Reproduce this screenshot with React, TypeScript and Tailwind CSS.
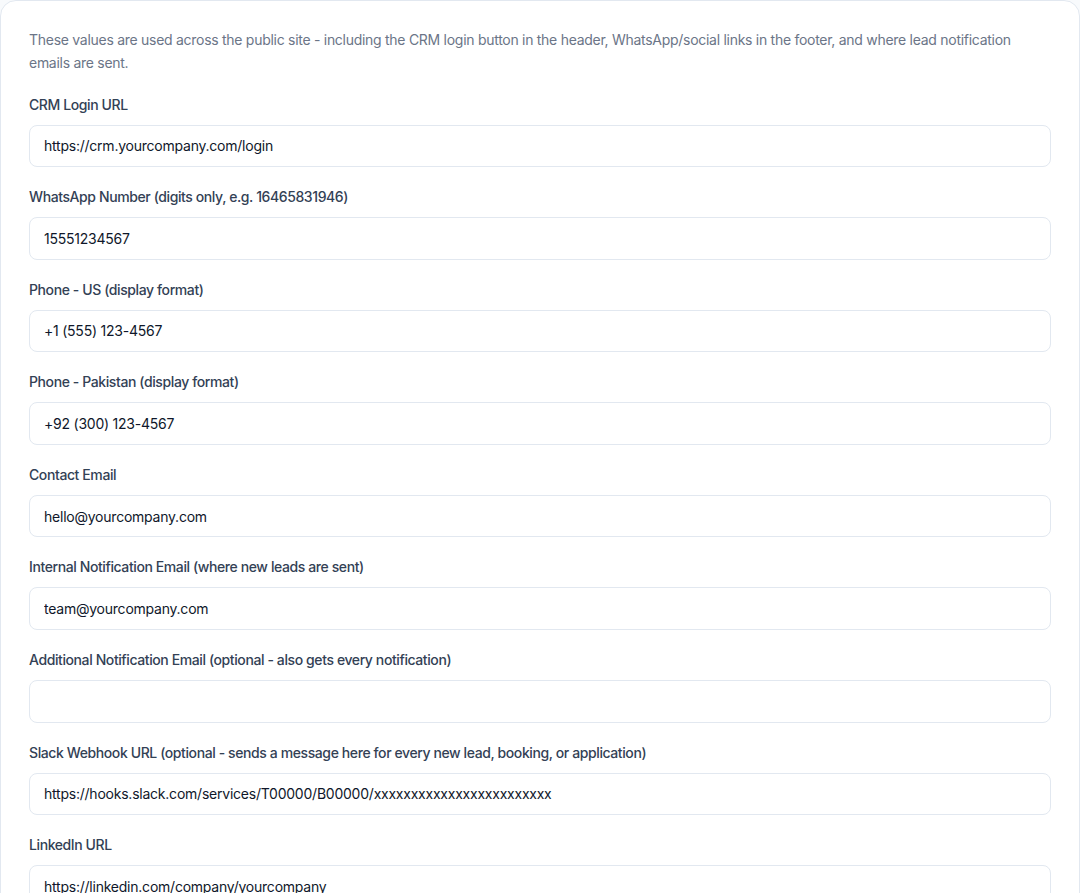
import React from "react";

const fields: { label: string; value: string }[] = [
  { label: "CRM Login URL", value: "https://crm.yourcompany.com/login" },
  { label: "WhatsApp Number (digits only, e.g. 16465831946)", value: "15551234567" },
  { label: "Phone - US (display format)", value: "+1 (555) 123-4567" },
  { label: "Phone - Pakistan (display format)", value: "+92 (300) 123-4567" },
  { label: "Contact Email", value: "hello@yourcompany.com" },
  { label: "Internal Notification Email (where new leads are sent)", value: "team@yourcompany.com" },
  { label: "Additional Notification Email (optional - also gets every notification)", value: "" },
  {
    label: "Slack Webhook URL (optional - sends a message here for every new lead, booking, or application)",
    value: "https://hooks.slack.com/services/T00000/B00000/xxxxxxxxxxxxxxxxxxxxxxxx",
  },
  { label: "LinkedIn URL", value: "https://linkedin.com/company/yourcompany" },
  { label: "Instagram URL", value: "https://instagram.com/yourcompany" },
];

export default function App() {
  return (
    <div
      className="h-[893px] w-[1080px] overflow-hidden bg-[#f8fafc]"
      style={{ fontFamily: "Inter, 'Noto Sans', sans-serif" }}
    >
      <div className="rounded-2xl border border-[#e2e8f0] bg-white p-7">
        <p className="mb-5 text-sm leading-relaxed tracking-[-0.28px] text-[#6b7587]">
          These values are used across the public site - including the CRM login button in the header,
          WhatsApp/social links in the footer, and where lead notification emails are sent.
        </p>
        <div className="flex flex-col gap-5">
          {fields.map((f) => (
            <div key={f.label}>
              <label className="mb-2.5 block text-sm leading-5 font-medium tracking-[-0.4px] text-[#334155]">
                {f.label}
              </label>
              <input
                readOnly
                value={f.value}
                className="block h-[42.6px] w-full rounded-lg border border-[#e2e8f0] bg-white px-3.5 text-sm tracking-[-0.23px] text-[#0f172a] outline-none"
                style={{ fontFamily: "Inter, 'Noto Sans', sans-serif" }}
              />
            </div>
          ))}
        </div>
      </div>
    </div>
  );
}
